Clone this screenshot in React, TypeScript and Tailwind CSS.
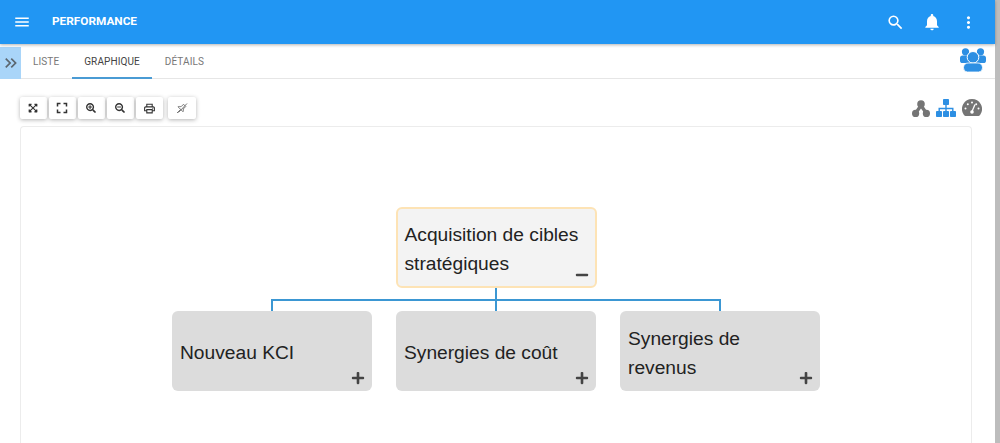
import React from "react";
import { MdMenu, MdSearch, MdNotifications, MdMoreVert, MdFullscreen, MdOutlinePrint, MdKeyboardDoubleArrowRight } from "react-icons/md";
import { FaExpandArrowsAlt, FaPlus, FaMinus, FaSearchPlus, FaSearchMinus } from "react-icons/fa";

function ToolButton({ children, className = "" }: { children: React.ReactNode; className?: string }) {
  return (
    <button className={"flex h-[22px] w-[26.5px] items-center justify-center rounded-[2px] bg-white text-[#333] shadow-[0_1px_4px_rgba(0,0,0,0.3)] " + className}>
      {children}
    </button>
  );
}

function TreeIcon() {
  return (
    <svg viewBox="0 0 18 17" className="h-[17px] w-[18px]" fill="#757575">
      <circle cx="9" cy="4" r="3.8" />
      <circle cx="3.6" cy="13.4" r="3.6" />
      <circle cx="14.4" cy="13.4" r="3.6" />
      <path d="M7.2 5 L2.5 12 L5 14 L9 8.5 L13 14 L15.5 12 L10.8 5 Z" />
    </svg>
  );
}

function SitemapIcon() {
  return (
    <svg viewBox="0 0 20 18" className="h-[18px] w-[20px]" fill="#2d8fe3">
      <rect x="7" y="0" width="6" height="6" rx="0.8" />
      <rect x="0" y="12" width="6" height="6" rx="0.8" />
      <rect x="7" y="12" width="6" height="6" rx="0.8" />
      <rect x="14" y="12" width="6" height="6" rx="0.8" />
      <path d="M9.3 6h1.4v2.8h6.8V12h-1.4V10.2h-5.4V12H9.300V10.200H3.900V12H2.500V8.800h6.800z" />
    </svg>
  );
}

function GaugeIcon() {
  return (
    <svg viewBox="0 0 20 18" className="h-[18px] w-[20px]">
      <path d="M10 0a10 10 0 0 1 8.600 15.100 2.400 2.400 0 0 1-2 1.900H3.400a2.400 2.400 0 0 1-2-1.900A10 10 0 0 1 10 0z" fill="#757575" />
      <path d="M10 12.500 L13 5.500" stroke="#fff" strokeWidth="1.300" fill="none" />
      <circle cx="10" cy="3.500" r="1" fill="#fff" />
      <circle cx="5.800" cy="5.300" r="1" fill="#fff" />
      <circle cx="14.200" cy="5.300" r="1" fill="#fff" />
      <circle cx="3.500" cy="9.500" r="1" fill="#fff" />
      <circle cx="16.500" cy="9.500" r="1" fill="#fff" />
      <circle cx="10" cy="13" r="1.800" fill="#fff" />
    </svg>
  );
}

function UsersIcon() {
  return (
    <svg viewBox="0 0 26 24" className="h-[24px] w-[26px]" fill="#2d8fe3">
      <circle cx="5.500" cy="3.800" r="3.600" />
      <circle cx="20.500" cy="3.800" r="3.600" />
      <path d="M0 10a2.600 2.600 0 0 1 2.600-2.600h20.800A2.600 2.600 0 0 1 26 10v2.500a2.600 2.600 0 0 1-2.600 2.600H2.600A2.600 2.600 0 0 1 0 12.500z" />
      <circle cx="13" cy="9.300" r="5.800" stroke="#fff" strokeWidth="1" />
      <path d="M3.500 19.500a4.500 4.500 0 0 1 4.500-4.500h10a4.500 4.500 0 0 1 4.500 4.500v0.500a4 4 0 0 1-4 4H7.500a4 4 0 0 1-4-4z" stroke="#fff" strokeWidth="0.800" />
    </svg>
  );
}

function PinOffIcon() {
  return (
    <svg viewBox="0 0 24 24" className="h-[12px] w-[12px]" fill="none" stroke="#777" strokeWidth="2">
      <path d="M2 22l7-7" />
      <path d="M4 9.500l10 10c1-2 1-4 .500-5.500l5-5-4.500-4.500-5 5C8.500 9 6 8.500 4 9.500z" />
      <path d="M5 21L22 3" />
    </svg>
  );
}

function Node({ lines, active }: { lines: string[]; active?: boolean }) {
  return (
    <div
      className={
        "relative flex flex-col justify-center rounded-[6px] pt-[3px] font-['Liberation_Sans',Arial,sans-serif] text-[19.2px] leading-[29px] text-[#222] " +
        (active ? "h-[81px] w-[201px] border-2 border-[#fde3b5] bg-[#f3f3f3] px-[7px]" : "h-[80px] w-[200px] bg-[#dcdcdc] px-[8px]")
      }
    >
      {lines.map((l) => (
        <div key={l}>{l}</div>
      ))}
      {active ? (
        <FaMinus size={14} className="absolute right-[6px] bottom-[4px] text-[#444]" />
      ) : (
        <FaPlus size={14} className="absolute right-[7px] bottom-[6px] text-[#444]" />
      )}
    </div>
  );
}

export default function App() {
  return (
    <div className="flex h-[443px] w-[1000px] overflow-hidden bg-white font-['Roboto',sans-serif]">
      <div className="flex min-w-0 flex-1 flex-col">
        <header className="z-10 flex h-[44px] shrink-0 items-center bg-[#2196f3] text-white shadow-[0_1px_3px_rgba(0,0,0,0.3)]">
          <MdMenu size={18} className="ml-[13px]" />
          <span className="ml-[21px] text-[11.8px] font-bold">PERFORMANCE</span>
          <div className="ml-auto flex items-center">
            <MdSearch size={19} className="mr-[17px]" />
            <MdNotifications size={20} className="mr-[17px]" />
            <MdMoreVert size={19} className="mr-[17px]" />
          </div>
        </header>
        <div className="flex h-[35px] shrink-0 items-end border-b border-[#e6e6e6]">
          <div className="mb-[-1px] flex h-[32px] w-[21px] items-center justify-center self-end bg-[#a9d5f9] text-[#5c6770]">
            <MdKeyboardDoubleArrowRight size={20} />
          </div>
          <nav className="flex h-full items-center text-[10px] tracking-[0.1px] text-[#777]">
            <span className="ml-[12px]">LISTE</span>
            <span className="relative ml-[13px] flex h-full items-center px-[12px] text-[#444]">
              GRAPHIQUE
              <span className="absolute right-0 bottom-[-1px] left-0 h-[2px] bg-[#4a9bd4]" />
            </span>
            <span className="ml-[13px]">DÉTAILS</span>
          </nav>
          <span className="mr-[9px] mb-[6px] ml-auto">
            <UsersIcon />
          </span>
        </div>
        <div className="mr-[13px] ml-[20px] mt-[18px] flex h-[22px] items-center">
          <div className="flex items-center gap-[2.5px]">
            <ToolButton><FaExpandArrowsAlt size={10} /></ToolButton>
            <ToolButton><MdFullscreen size={18} /></ToolButton>
            <ToolButton><FaSearchPlus size={10} /></ToolButton>
            <ToolButton><FaSearchMinus size={10} /></ToolButton>
            <ToolButton><MdOutlinePrint size={13} /></ToolButton>
            <ToolButton className="ml-[3px] w-[28px]"><PinOffIcon /></ToolButton>
          </div>
          <div className="ml-auto flex items-center gap-[6px]">
            <TreeIcon />
            <SitemapIcon />
            <GaugeIcon />
          </div>
        </div>
        <main className="mr-[23px] ml-[20px] mt-[7px] flex flex-1 flex-col items-center rounded-t-[4px] border border-b-0 border-[#ececec] pt-[80px]">
          <Node lines={["Acquisition de cibles", "stratégiques"]} active />
          <div className="h-[11px] w-[2px] bg-[#3b97d3]" />
          <div className="h-[2px] w-[450px] bg-[#3b97d3]" />
          <div className="flex w-[450px] justify-between">
            <div className="h-[10px] w-[2px] bg-[#3b97d3]" />
            <div className="h-[10px] w-[2px] bg-[#3b97d3]" />
            <div className="h-[10px] w-[2px] bg-[#3b97d3]" />
          </div>
          <div className="flex gap-[24px]">
            <Node lines={["Nouveau KCI"]} />
            <Node lines={["Synergies de coût"]} />
            <Node lines={["Synergies de", "revenus"]} />
          </div>
        </main>
      </div>
      <div className="w-[5px] shrink-0 bg-[#bdbdbd]" />
    </div>
  );
}
